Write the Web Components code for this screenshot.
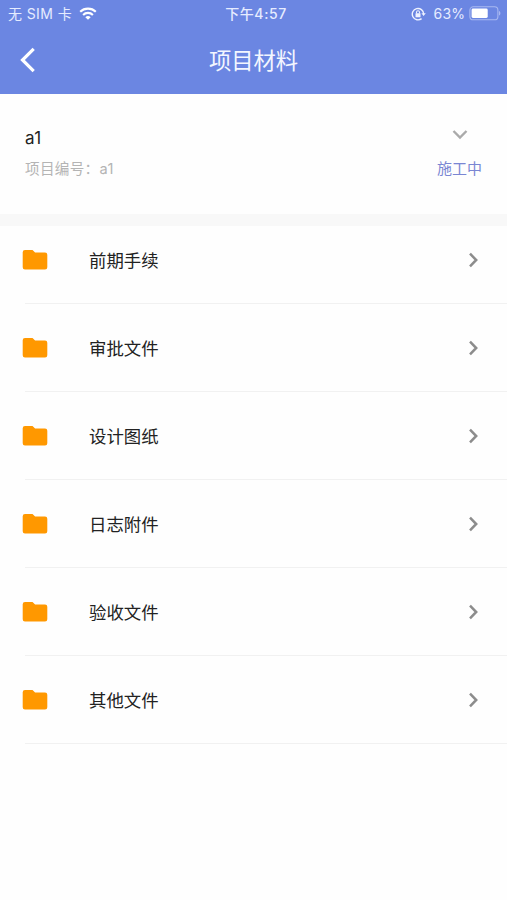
<!DOCTYPE html>
<html lang="zh-CN">
<head>
<meta charset="UTF-8">
<meta name="viewport" content="width=device-width, initial-scale=1">
<title>项目材料</title>
<style>
  body {
    margin: 0;
    min-height: 100vh;
    background: #fefefe;
    color: #222;
    font-family: Inter, "Noto Sans CJK SC", sans-serif;
  }
</style>
</head>
<body>
<materials-page>
  <status-bar slot="top" carrier="无 SIM 卡" time="下午4:57" battery="63"></status-bar>
  <nav-bar slot="top">项目材料</nav-bar>
  <project-card code="a1" status="施工中">a1</project-card>
  <folder-list>
    <folder-item>前期手续</folder-item>
    <folder-item>审批文件</folder-item>
    <folder-item>设计图纸</folder-item>
    <folder-item>日志附件</folder-item>
    <folder-item>验收文件</folder-item>
    <folder-item>其他文件</folder-item>
  </folder-list>
</materials-page>

<script>
// Page shell: coloured header on top, content below
class MaterialsPage extends HTMLElement {
  constructor() {
    super();
    this.attachShadow({ mode: 'open' });
    this.shadowRoot.innerHTML = `
      <style>
        :host {
          display: flex;
          flex-direction: column;
        }

        header {
          height: 93.5px;
          background: #6b86e2;
          color: #f3f6ff;
        }
      </style>
      <header><slot name="top"></slot></header>
      <slot></slot>
    `;
  }
}

// Phone status bar
class StatusBar extends HTMLElement {
  constructor() {
    super();
    this.attachShadow({ mode: 'open' });
  }

  connectedCallback() {
    const level = Number(this.getAttribute('battery')) || 0;

    this.shadowRoot.innerHTML = `
      <style>
        :host {
          display: grid;
          grid-template-columns: 1fr auto 1fr;
          align-items: center;
          height: 27px;
          padding: 0 6px 0 8px;
          font-size: 14px;
          line-height: 27px;
          white-space: nowrap;
          color: #e6ecff;
        }

        .left, .right {
          display: flex;
          align-items: center;
        }

        .left {
          gap: 7px;
          letter-spacing: 0.4px;
        }

        .right {
          justify-content: flex-end;
        }

        .time {
          font-weight: 500;
          padding-left: 3px;
          letter-spacing: 0.6px;
        }

        .percent {
          margin: 0 4px 0 8px;
          letter-spacing: 0.1px;
        }

        svg {
          display: block;
          flex: none;
        }
      </style>
      <div class="left">
        <span>${this.getAttribute('carrier')}</span>
        <svg width="18" height="13" viewBox="0 0 18 13" fill="none" stroke="#fff" stroke-width="2.1">
          <path d="M1.2 4.8a11.2 11.2 0 0 1 15.6 0"/>
          <path d="M4.1 7.9a7 7 0 0 1 9.8 0"/>
          <path d="M6.3 10.2a3.9 3.9 0 0 1 5.4 0L9 12.8z" fill="#fff" stroke="none"/>
        </svg>
      </div>
      <span class="time">${this.getAttribute('time')}</span>
      <div class="right">
        <svg width="15" height="14" viewBox="0 0 15 14" fill="none" stroke="#eef2ff" stroke-width="1.4">
          <path d="M10.6 11.6A5.7 5.7 0 1 1 12.7 7"/>
          <path d="M10.4 6.2h4.4l-2.2 2.9z" fill="#eef2ff" stroke="none"/>
          <rect x="4.5" y="6.2" width="5" height="4" rx=".5" fill="#eef2ff" stroke="none"/>
          <path d="M5.5 6.4V5.2a1.5 1.5 0 0 1 3 0v1.2" stroke-width="1.1"/>
        </svg>
        <span class="percent">${level}%</span>
        <svg width="32" height="15" viewBox="0 0 32 15">
          <rect x=".9" y=".8" width="28" height="13" rx="3.4" fill="none" stroke="#a9b9f1" stroke-width="1.1"/>
          <rect x="2.6" y="2.6" width="${24 * level / 100 + 1}" height="9.4" rx="1.4" fill="#fff"/>
          <path d="M30 5v4.6c1.9-.7 1.9-3.9 0-4.6z" fill="#a9b9f1"/>
        </svg>
      </div>
    `;
  }
}

// Title bar with a back arrow
class NavBar extends HTMLElement {
  constructor() {
    super();
    this.attachShadow({ mode: 'open' });
    this.shadowRoot.innerHTML = `
      <style>
        :host {
          display: grid;
          grid-template-columns: 1fr auto 1fr;
          align-items: center;
          height: 66px;
          padding: 0 20px;
          box-sizing: border-box;
        }

        .title {
          padding-top: 2px;
          font-size: 22.3px;
          line-height: 30px;
        }

        svg {
          display: block;
        }
      </style>
      <svg width="16" height="26" viewBox="0 0 16 26" fill="none" stroke="#fff" stroke-width="3.2">
        <path d="M13.7 1.8 2.5 13l11.2 11.2"/>
      </svg>
      <span class="title"><slot></slot></span>
    `;
  }
}

// Project summary
class ProjectCard extends HTMLElement {
  constructor() {
    super();
    this.attachShadow({ mode: 'open' });
  }

  connectedCallback() {
    this.shadowRoot.innerHTML = `
      <style>
        :host {
          display: flex;
          justify-content: space-between;
          height: 120.5px;
          padding: 30px 25px 0;
          box-sizing: border-box;
          background: #fefefe;
          white-space: nowrap;
        }

        .name {
          font-size: 17px;
          line-height: 28px;
          letter-spacing: 0.3px;
        }

        .code {
          font-size: 14.6px;
          line-height: 35px;
          letter-spacing: 0.3px;
          color: #b4b4b4;
        }

        .side {
          display: flex;
          flex-direction: column;
          align-items: center;
        }

        .status {
          font-size: 15px;
          line-height: 20px;
          color: #7a86d3;
        }

        svg {
          display: block;
          margin: 5px 0 19px 1px;
        }
      </style>
      <div>
        <div class="name"><slot></slot></div>
        <div class="code">项目编号：${this.getAttribute('code')}</div>
      </div>
      <div class="side">
        <svg width="16" height="11" viewBox="0 0 16 11" fill="none" stroke="#aaa" stroke-width="2.4">
          <path d="M1.5 2 8 8.5 14.5 2"/>
        </svg>
        <span class="status">${this.getAttribute('status')}</span>
      </div>
    `;
  }
}

class FolderList extends HTMLElement {
  constructor() {
    super();
    this.attachShadow({ mode: 'open' });
    this.shadowRoot.innerHTML = `
      <style>
        :host {
          display: flex;
          flex-direction: column;
          border-top: 12px solid #f8f8f8;
        }

        /* the first row has less space above its label */
        ::slotted(folder-item:first-child) {
          height: 78px;
          padding-bottom: 10px;
        }
      </style>
      <slot></slot>
    `;
  }
}

class FolderItem extends HTMLElement {
  constructor() {
    super();
    this.attachShadow({ mode: 'open' });
    this.shadowRoot.innerHTML = `
      <style>
        :host {
          display: flex;
          height: 88px;
          box-sizing: border-box;
          background: linear-gradient(#f1f1f1, #f1f1f1) 25px 100% / 100% 1px no-repeat;
        }

        .row {
          flex: 1;
          display: flex;
          align-items: center;
          padding: 0 28px 0 22px;
        }

        .label {
          flex: 1;
          margin-left: 41px;
          padding-top: 1px;
          font-size: 17.4px;
          line-height: 26px;
        }

        svg {
          display: block;
          flex: none;
        }
      </style>
      <div class="row">
        <svg width="26" height="20" viewBox="0 0 26 20" fill="#ff9800">
          <path d="M3 0h7.5l2.6 2.4H23a2.3 2.3 0 0 1 2.3 2.3v12.6a2.3 2.3 0 0 1-2.3 2.3H3A2.3 2.3 0 0 1 .7 17.3v-15A2.3 2.3 0 0 1 3 0z"/>
        </svg>
        <span class="label"><slot></slot></span>
        <svg width="11" height="16" viewBox="0 0 11 16" fill="none" stroke="#8c8c8c" stroke-width="2.5">
          <path d="M2 1.7 8.2 8 2 14.3"/>
        </svg>
      </div>
    `;
  }
}

customElements.define('materials-page', MaterialsPage);
customElements.define('status-bar', StatusBar);
customElements.define('nav-bar', NavBar);
customElements.define('project-card', ProjectCard);
customElements.define('folder-list', FolderList);
customElements.define('folder-item', FolderItem);
</script>
</body>
</html>
